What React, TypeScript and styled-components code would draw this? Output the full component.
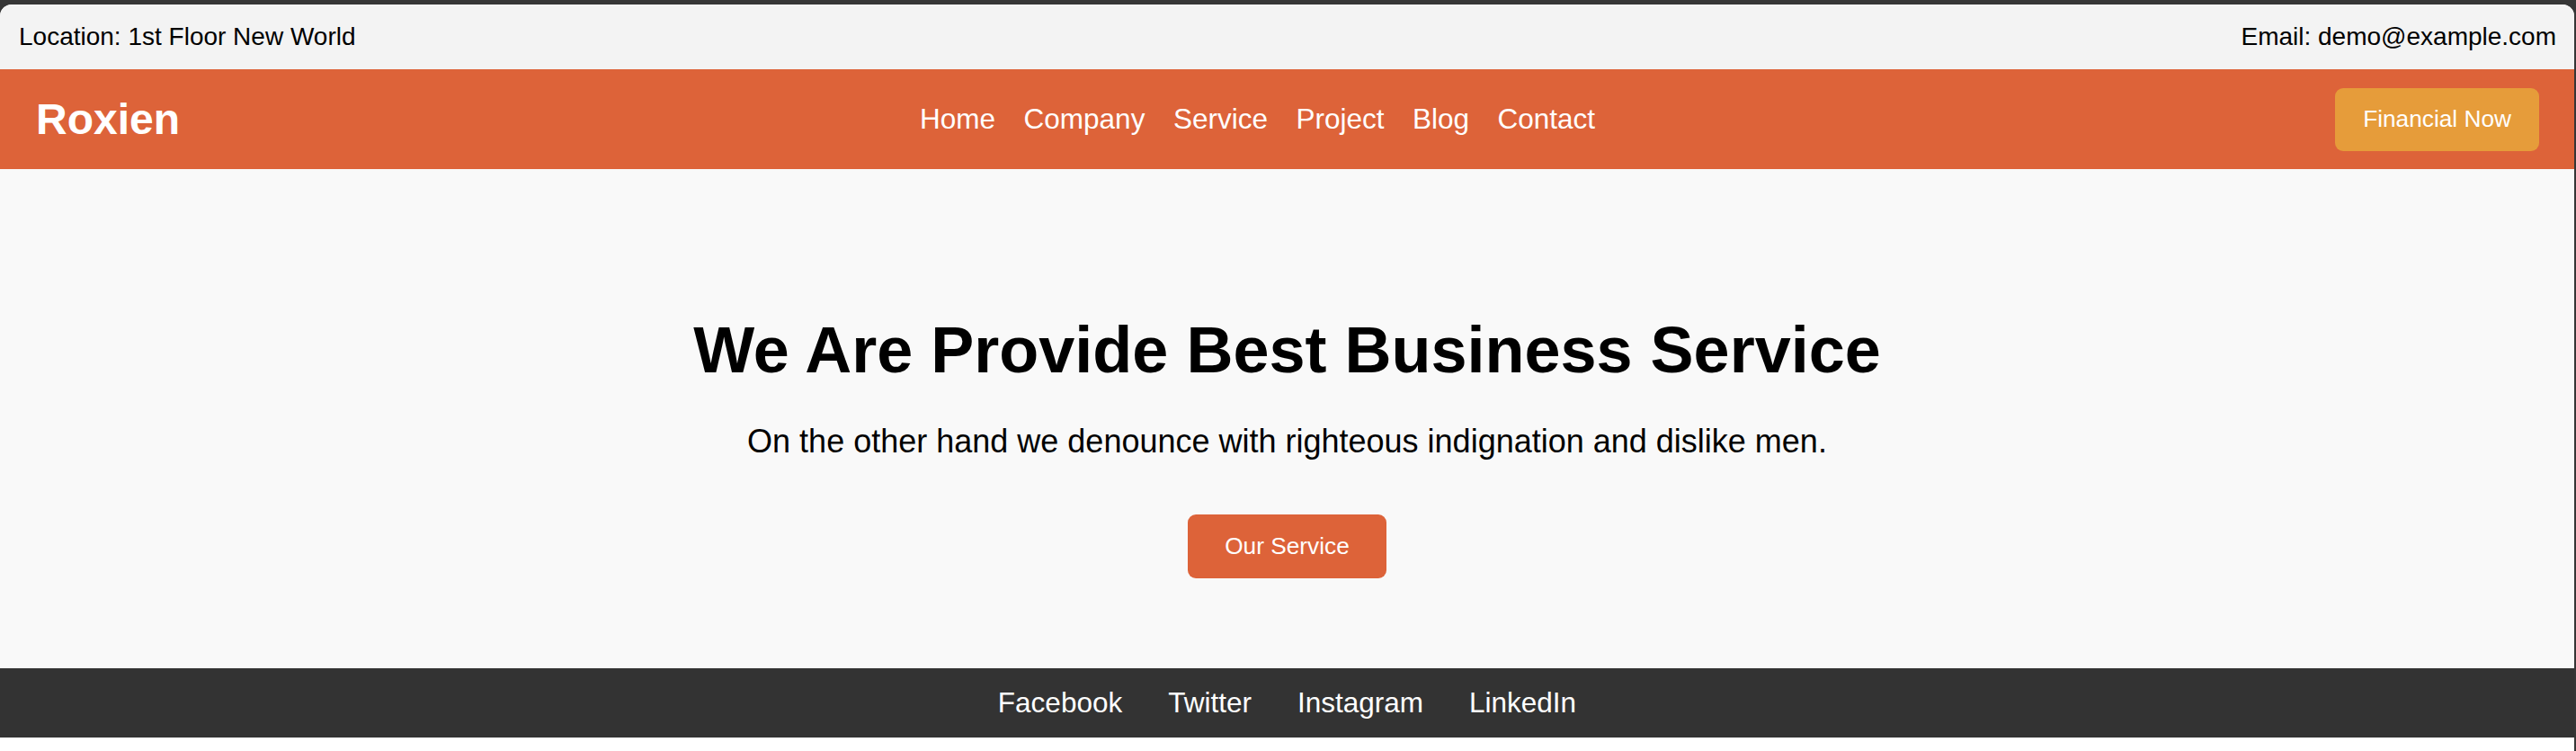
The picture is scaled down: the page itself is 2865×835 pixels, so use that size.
import React from "react";
import styled, { createGlobalStyle } from "styled-components";

const GlobalStyle = createGlobalStyle`
  html, body {
    margin: 0;
    padding: 0;
  }
  body {
    background: #363636;
    font-family: "Liberation Sans", Arial, Helvetica, sans-serif;
  }
`;

const Frame = styled.div`
  margin: 5px 2px 0 0;
  min-height: calc(100vh - 5px);
  background: #ffffff;
  border-radius: 13px 13px 0 0;
  overflow: hidden;
  display: flex;
  flex-direction: column;
`;

const TopBar = styled.div`
  display: flex;
  justify-content: space-between;
  align-items: center;
  height: 72px;
  box-sizing: border-box;
  padding: 0 20px 0 21px;
  background: #f3f3f3;
  color: #000;
  font-size: 28px;
`;

const NavBar = styled.nav`
  display: flex;
  justify-content: space-between;
  align-items: center;
  height: 111px;
  box-sizing: border-box;
  padding: 0 39px 0 40px;
  background: #dd6339;
`;

const Logo = styled.div`
  color: #fff;
  font-size: 48px;
  font-weight: 700;
`;

const NavLinks = styled.ul`
  display: flex;
  gap: 31.5px;
  list-style: none;
  margin: 0;
  padding: 0;
`;

const NavLink = styled.a`
  color: #fff;
  font-size: 31.5px;
  text-decoration: none;
`;

const Button = styled.button<{ $tone: "gold" | "orange"; $padX: number; $h: number }>`
  display: inline-flex;
  align-items: center;
  justify-content: center;
  height: ${(p) => p.$h}px;
  padding: 0 ${(p) => p.$padX}px;
  border: none;
  border-radius: 9px;
  background: ${(p) => (p.$tone === "gold" ? "#e69c3a" : "#dd6339")};
  color: #fff;
  font-family: inherit;
  font-size: 26.25px;
  cursor: pointer;
`;

const Hero = styled.section`
  background: #f9f9f9;
  height: 555px;
  box-sizing: border-box;
  padding-top: 160px;
  text-align: center;
`;

const Title = styled.h1`
  margin: 0 0 40px;
  font-size: 72px;
  font-weight: 700;
  color: #000;
`;

const Subtitle = styled.p`
  margin: 0 0 60px;
  font-size: 36px;
  color: #000;
`;

const Footer = styled.footer`
  display: flex;
  justify-content: center;
  align-items: center;
  gap: 51px;
  height: 77px;
  background: #333333;
`;

const FooterLink = styled.a`
  color: #fff;
  font-size: 31.5px;
  text-decoration: none;
`;

const navItems = ["Home", "Company", "Service", "Project", "Blog", "Contact"];
const socials = ["Facebook", "Twitter", "Instagram", "LinkedIn"];

export default function App() {
  return (
    <>
      <GlobalStyle />
      <Frame>
        <TopBar>
          <span>Location: 1st Floor New World</span>
          <span>Email: demo@example.com</span>
        </TopBar>
        <NavBar>
          <Logo>Roxien</Logo>
          <NavLinks>
            {navItems.map((item) => (
              <li key={item}>
                <NavLink href="#">{item}</NavLink>
              </li>
            ))}
          </NavLinks>
          <Button $tone="gold" $padX={31} $h={70}>
            Financial Now
          </Button>
        </NavBar>
        <Hero>
          <Title>We Are Provide Best Business Service</Title>
          <Subtitle>On the other hand we denounce with righteous indignation and dislike men.</Subtitle>
          <Button $tone="orange" $padX={41} $h={71}>
            Our Service
          </Button>
        </Hero>
        <Footer>
          {socials.map((s) => (
            <FooterLink key={s} href="#">
              {s}
            </FooterLink>
          ))}
        </Footer>
      </Frame>
    </>
  );
}
